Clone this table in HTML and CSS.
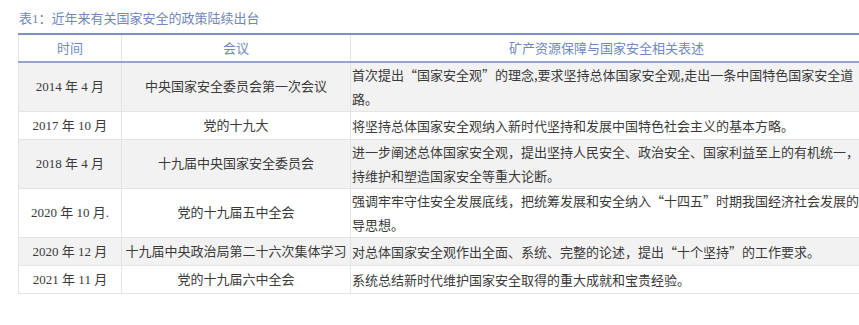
FILE: index.html
```html
<!DOCTYPE html>
<html lang="zh-CN">
<head>
<meta charset="utf-8">
<link rel="stylesheet" href="styles.css">
</head>
<body>
<div class="page">
  <div class="caption">表1：近年来有关国家安全的政策陆续出台</div>
  <div class="table-wrap">
    <table class="policy">
      <colgroup>
        <col class="c-time">
        <col class="c-meet">
        <col class="c-desc">
      </colgroup>
      <thead>
        <tr>
          <th>时间</th>
          <th>会议</th>
          <th>矿产资源保障与国家安全相关表述</th>
        </tr>
      </thead>
      <tbody>
        <tr class="shade">
          <td class="ctr">2014 年 4 月</td>
          <td class="ctr">中央国家安全委员会第一次会议</td>
          <td class="desc">首次提出“国家安全观”的理念,要求坚持总体国家安全观,走出一条中国特色国家安全道<br>路。</td>
        </tr>
        <tr>
          <td class="ctr">2017 年 10 月</td>
          <td class="ctr">党的十九大</td>
          <td class="desc">将坚持总体国家安全观纳入新时代坚持和发展中国特色社会主义的基本方略。</td>
        </tr>
        <tr class="shade">
          <td class="ctr">2018 年 4 月</td>
          <td class="ctr">十九届中央国家安全委员会</td>
          <td class="desc">进一步阐述总体国家安全观，提出坚持人民安全、政治安全、国家利益至上的有机统一，坚<br>持维护和塑造国家安全等重大论断。</td>
        </tr>
        <tr>
          <td class="ctr">2020 年 10 月.</td>
          <td class="ctr">党的十九届五中全会</td>
          <td class="desc">强调牢牢守住安全发展底线，把统筹发展和安全纳入“十四五”时期我国经济社会发展的指<br>导思想。</td>
        </tr>
        <tr class="shade">
          <td class="ctr">2020 年 12 月</td>
          <td class="ctr">十九届中央政治局第二十六次集体学习</td>
          <td class="desc">对总体国家安全观作出全面、系统、完整的论述，提出“十个坚持”的工作要求。</td>
        </tr>
        <tr>
          <td class="ctr">2021 年 11 月</td>
          <td class="ctr">党的十九届六中全会</td>
          <td class="desc">系统总结新时代维护国家安全取得的重大成就和宝贵经验。</td>
        </tr>
      </tbody>
    </table>
  </div>
</div>
</body>
</html>
```

FILE: styles.css
```css
html, body {
  margin: 0;
  padding: 0;
  background: #ffffff;
  overflow: hidden;
}

.page {
  padding: 10px 0 0 18px;
  font-family: "Liberation Serif", "Noto Sans CJK SC", serif;
  font-size: 13px;
  color: #3a3a3a;
}

.caption {
  color: #6f87bc;
  font-size: 13px;
  line-height: 18px;
  padding-left: 1px;
  margin-bottom: 5px;
}

.table-wrap {
  width: 860px;
  overflow: hidden;
}

.policy {
  width: 844px;
  table-layout: fixed;
  border-collapse: collapse;
  border-top: 2px solid #7d91c5;
}

.c-time { width: 103px; }
.c-meet { width: 229px; }
.c-desc { width: 512px; }

.policy th {
  height: 26px;
  line-height: 26px;
  padding: 0;
  font-weight: normal;
  font-family: "Noto Sans CJK SC", sans-serif;
  color: #7089bf;
  text-align: center;
  border-bottom: 2px solid #93a5d0;
  border-left: 1px solid #e4e4e4;
  border-right: 1px solid #e4e4e4;
}

.policy td {
  height: 27px;
  line-height: 24px;
  padding: 0;
  vertical-align: middle;
  border: 1px solid #e4e4e4;
  border-top: none;
}

.policy tr.shade td {
  background: #f2f2f2;
}

.policy td.ctr {
  text-align: center;
}

.policy td.desc {
  text-align: left;
  padding-left: 1px;
  white-space: nowrap;
  font-family: "Noto Sans CJK SC", sans-serif;
}
```
